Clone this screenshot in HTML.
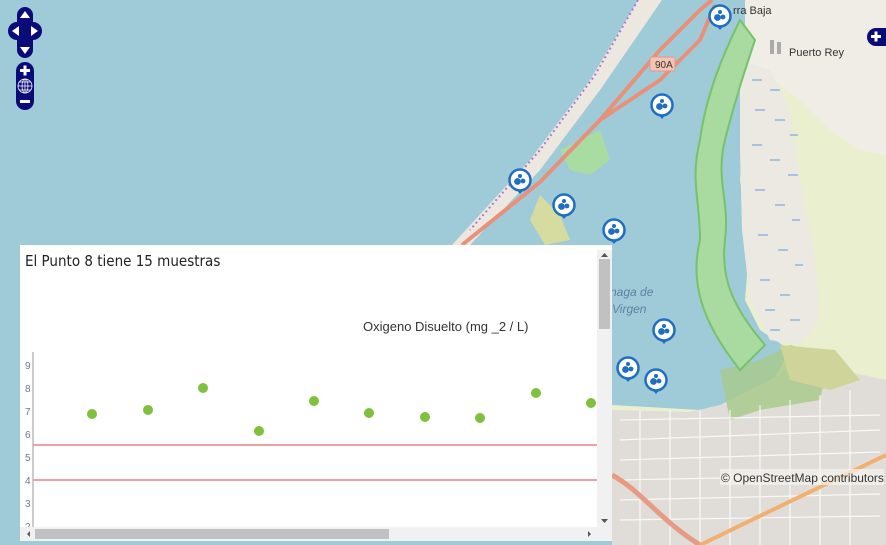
<!DOCTYPE html>
<html><head><meta charset="utf-8"><style>
html,body{margin:0;padding:0;width:886px;height:545px;overflow:hidden;font-family:"Liberation Sans",sans-serif;}
#map{position:absolute;left:0;top:0;width:886px;height:545px;background:#9fcad7;}
#pop{position:absolute;left:20px;top:245px;width:592px;height:296px;background:#fff;overflow:hidden;}
</style></head><body>
<div id="map">
<svg width="886" height="545" style="position:absolute;left:0;top:0">
 <polygon points="745,0 886,0 886,545 612,545 612,405 700,410 760,405 790,350 760,330 745,300 750,240 740,180 745,120 745,60" fill="#e9efcf"/>
 <polygon points="745,60 760,70 800,100 830,130 860,150 886,155 886,0 745,0" fill="#f0ede6"/>
 <polygon points="740,60 770,70 790,110 800,180 815,260 820,320 800,345 770,340 750,300 742,230 740,150" fill="#ece9e2"/>
 <g stroke="#5a9de0" stroke-width="1">
  <path d="M752 80h10M770 90h10M755 110h10M775 120h10M790 135h8M752 145h10M770 160h10M788 175h10M755 190h10M775 205h10M792 220h8M758 235h10M778 250h10M795 265h8M760 280h10M780 295h10M765 310h10M790 320h10M770 330h10"/>
 </g>
 <polygon points="612,410 690,412 720,405 740,395 770,380 800,360 840,370 886,380 886,545 612,545" fill="#e0ddd8"/>
 <polygon points="720,370 760,360 790,345 830,355 820,400 760,410 730,420" fill="#a8c98a" opacity="0.8"/>
 <polygon points="780,345 835,350 860,380 830,390 790,380" fill="#cfd59a"/>
 <g stroke="#fff" stroke-width="1.2" opacity="0.8">
  <path d="M620 420l260 -5M620 440l260 -10M620 460l260 -8M620 480l260 -5M620 500l260 -6M620 520l260 -4M640 410v135M670 410v135M700 410v135M730 410v135M760 405v140M790 400v145M820 395v150M850 390v155"/>
 </g>
 <path d="M612 475 C640 490 660 520 700 545" stroke="#e79b84" stroke-width="5" fill="none"/>
 <path d="M700 545 L886 455" stroke="#f2b070" stroke-width="4" fill="none"/>
 <path d="M740 20 C720 60 705 100 700 140 C690 180 700 200 700 240 C690 280 700 320 740 370 L765 345 C735 310 720 280 725 240 C730 200 715 180 725 140 C735 100 745 70 755 40 Z" fill="#a9da9f" stroke="#77c26d" stroke-width="2"/>
 <polygon points="638,0 662,0 600,90 540,170 470,245 452,245 530,160 590,80" fill="#ece8e0"/>
 <polygon points="560,150 600,130 610,160 590,175 570,170" fill="#a9dca0"/>
 <polygon points="540,195 560,215 570,240 545,245 530,220" fill="#d6dca0"/>
 <path d="M638 0 L595 75 L540 150 L470 230" stroke="#b07ad0" stroke-width="2" stroke-dasharray="2 3" fill="none"/>
 <path d="M462 245 L540 182 L600 120 L660 50 L700 10 L712 0" stroke="#e8907a" stroke-width="4" fill="none"/>
 <path d="M600 120 L660 80 L700 40 L715 5" stroke="#e8907a" stroke-width="4" fill="none"/>
 <rect x="650" y="57" width="25" height="14" rx="2" fill="#f4c4b0" stroke="#d99"/>
 <text x="655" y="68" font-size="10" fill="#333">90A</text>
 <text x="733" y="14" font-size="11" fill="#333">rra Baja</text>
 <rect x="770" y="40" width="4" height="14" fill="#aaa"/><rect x="777" y="42" width="4" height="12" fill="#aaa"/>
 <text x="789" y="56" font-size="11" fill="#333">Puerto Rey</text>
 <text x="610" y="296" font-size="12" fill="#5f7fa8" font-style="italic">naga de</text>
 <text x="612" y="313" font-size="12" fill="#5f7fa8" font-style="italic">Virgen</text>
 <rect x="720" y="469" width="164" height="16" fill="#f5f3ee" opacity="0.7"/>
 <text x="721" y="482" font-size="12" fill="#333">© OpenStreetMap contributors</text>
</svg>
<svg width="886" height="545" style="position:absolute;left:0;top:0">
 <defs>
  <g id="pin">
   <path d="M-5 8 L0 14 L5 8 Z" fill="#1f6ec2"/>
   <circle r="10.5" fill="#fff" stroke="#1f6ec2" stroke-width="2.5"/>
   <circle cx="-2.5" cy="1.5" r="3.4" fill="#1f6ec2"/>
   <circle cx="3" cy="1" r="2.4" fill="#1f6ec2"/>
   <circle cx="0" cy="-4" r="2" fill="#1f6ec2"/>
  </g>
 </defs>
 <use href="#pin" x="720" y="16"/>
 <use href="#pin" x="662" y="105"/>
 <use href="#pin" x="520" y="180"/>
 <use href="#pin" x="564" y="205"/>
 <use href="#pin" x="614" y="230"/>
 <use href="#pin" x="664" y="330"/>
 <use href="#pin" x="628" y="368"/>
 <use href="#pin" x="656" y="380"/>
 <g fill="#0a0a78">
  <rect x="17" y="7" width="16" height="51" rx="8"/>
  <rect x="8" y="22" width="34" height="18" rx="9"/>
  <rect x="16" y="62" width="18" height="48" rx="9"/>
  <path d="M886 28 H876 a9 9 0 0 0 0 18 H886 Z"/>
 </g>
 <g fill="#fff">
  <path d="M25 11 L30 18 H20 Z"/><path d="M25 54 L30 47 H20 Z"/>
  <path d="M12 31 L19 26 V36 Z"/><path d="M38 31 L31 26 V36 Z"/>
  <rect x="20" y="69" width="10" height="3"/><rect x="23.5" y="65.5" width="3" height="10"/>
  <rect x="20" y="100" width="10" height="3"/>
  <rect x="871" y="35" width="10" height="3"/><rect x="874.5" y="31.5" width="3" height="10"/>
 </g>
 <g stroke="#fff" stroke-width="0.8" fill="none">
  <circle cx="25" cy="86" r="7"/><ellipse cx="25" cy="86" rx="3" ry="7"/><path d="M18 86h14M19 82h12M19 90h12M25 79v14"/>
 </g>
</svg>
</div>
<div id="pop">
 <div style="position:absolute;left:5px;top:7px;font-size:15px;color:#222;font-family:'DejaVu Sans Condensed','Liberation Sans Narrow','Liberation Sans',sans-serif;">El Punto 8 tiene 15 muestras</div>
 <svg width="592" height="296" style="position:absolute;left:0;top:0">
  <text x="343" y="86" font-size="13" fill="#333">Oxigeno Disuelto (mg _2 / L)</text>
  <line x1="13" y1="107" x2="13" y2="290" stroke="#999"/>
  <g font-size="10" fill="#777">
   <text x="5" y="124">9</text><text x="5" y="147">8</text><text x="5" y="170">7</text><text x="5" y="193">6</text><text x="5" y="216">5</text><text x="5" y="239">4</text><text x="5" y="262">3</text><text x="5" y="285">2</text>
  </g>
  <line x1="13" y1="200" x2="578" y2="200" stroke="#f0a0a0" stroke-width="2"/>
  <line x1="13" y1="235" x2="578" y2="235" stroke="#f0a0a0" stroke-width="2"/>
  <g fill="#7dc13c">
   <circle cx="72" cy="169" r="5"/><circle cx="128" cy="165" r="5"/><circle cx="183" cy="143" r="5"/><circle cx="239" cy="186" r="5"/><circle cx="294" cy="156" r="5"/><circle cx="349" cy="168" r="5"/><circle cx="405" cy="172" r="5"/><circle cx="460" cy="173" r="5"/><circle cx="516" cy="148" r="5"/><circle cx="571" cy="158" r="5"/>
  </g>
  <rect x="577" y="5" width="15" height="277" fill="#f1f1f1"/>
  <rect x="579" y="14" width="11" height="70" fill="#c1c1c1"/>
  <path d="M581 12 L584.5 8 L588 12Z M581 274 L584.5 278 L588 274Z" fill="#555"/>
  <rect x="0" y="282" width="592" height="14" fill="#f1f1f1"/>
  <rect x="15" y="284" width="354" height="10" fill="#c1c1c1"/>
  <path d="M7 289 L10 286 V292Z M568 286 L571 289 L568 292Z" fill="#555"/>
 </svg>
</div>
</body></html>
